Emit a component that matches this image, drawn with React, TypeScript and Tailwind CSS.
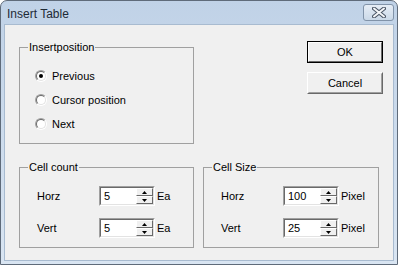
import React from "react";

const font = { fontFamily: '"Liberation Sans", Arial, sans-serif' };

const Radio = ({ label, checked }: { label: string; checked?: boolean }) => (
  <div className="flex items-center h-[24px]">
    <span className="w-[12px] h-[12px] rounded-full border border-t-[#a0a0a0] border-l-[#a0a0a0] border-r-white border-b-white flex">
      <span className="flex-1 rounded-full border border-t-[#696969] border-l-[#696969] border-r-[#e3e3e3] border-b-[#e3e3e3] bg-white flex items-center justify-center">
        {checked && <span className="w-[4px] h-[4px] rounded-full bg-black"></span>}
      </span>
    </span>
    <span className="ml-[5px] text-[11px] text-black">{label}</span>
  </div>
);

const SpinBtn = ({ up }: { up?: boolean }) => (
  <div className="h-[8px] bg-[#f0f0f0] border border-t-white border-l-white border-r-[#696969] border-b-[#696969] flex items-center justify-center">
    <svg width="5" height="3" viewBox="0 0 5 3">
      {up ? <path d="M2.5 0 L5 3 L0 3 Z" fill="#000" /> : <path d="M0 0 L5 0 L2.5 3 Z" fill="#000" />}
    </svg>
  </div>
);

const Spinner = ({ value }: { value: string }) => (
  <div className="w-[56px] h-[20px] border border-t-[#a0a0a0] border-l-[#a0a0a0] border-r-white border-b-white flex">
    <div className="flex-1 border border-t-[#696969] border-l-[#696969] border-r-[#e3e3e3] border-b-[#e3e3e3] bg-white flex">
      <span className="flex-1 pl-[3px] text-[11px] leading-[16px] text-black">{value}</span>
      <div className="w-[17px] flex flex-col">
        <SpinBtn up />
        <SpinBtn />
      </div>
    </div>
  </div>
);

const Field = ({ label, value, unit }: { label: string; value: string; unit: string }) => (
  <div className="flex items-center h-[20px]">
    <span className="w-[62px] text-[11px] text-black">{label}</span>
    <Spinner value={value} />
    <span className="ml-[2px] text-[11px] text-black">{unit}</span>
  </div>
);

const Group = ({ title, className, children }: { title: string; className: string; children: React.ReactNode }) => (
  <div className={`relative border border-[#a0a0a0] ${className}`}>
    <span className="absolute left-[8px] top-[-8px] bg-[#f0f0f0] px-[1px] text-[11px] leading-[14px] text-black">{title}</span>
    {children}
  </div>
);

const App: React.FC = () => {
  return (
    <div style={font} className="w-[398px] h-[265px] bg-white">
      <div className="w-[398px] h-[265px] rounded-t-[7px] border border-[#5f6b7a] bg-gradient-to-b from-[#c0d2e7] to-[#d9e5f2] flex flex-col">
        {/* Title bar */}
        <div className="h-[23px] flex items-start justify-between pl-[6px] pr-[3px]">
          <span className="mt-[4px] text-[12px] text-[#1e2a36]">Insert Table</span>
          <div className="mt-[3px] w-[31px] h-[17px] rounded-[3px] border border-[#8193a9] bg-gradient-to-b from-[#e6edf6] to-[#cbd9e8] flex items-center justify-center">
            <svg width="14" height="11" viewBox="0 0 14 11">
              <path d="M2 1.5 L12 9.5 M12 1.5 L2 9.5" stroke="#4a5565" strokeWidth="4" strokeLinecap="round" />
              <path d="M2 1.5 L12 9.5 M12 1.5 L2 9.5" stroke="#f4f6f9" strokeWidth="2" strokeLinecap="round" />
            </svg>
          </div>
        </div>

        {/* Client area */}
        <div className="flex-1 mx-[3px] mb-[3px] bg-[#f0f0f0] border border-[#a8bbd0] pl-[14px]">
          <div className="flex items-start">
            <Group title="Insertposition" className="mt-[22px] w-[175px] h-[97px] pl-[15px] pt-[16px]">
              <Radio label="Previous" checked />
              <Radio label="Cursor position" />
              <Radio label="Next" />
            </Group>
            <div className="ml-[113px] mt-[16px] flex flex-col">
              <button className="w-[76px] h-[22px] border border-black bg-[#f0f0f0] flex">
                <span className="flex-1 border border-t-white border-l-white border-r-[#696969] border-b-[#696969] text-[11px] text-black flex items-center justify-center">OK</span>
              </button>
              <button className="mt-[9px] w-[76px] h-[22px] border border-t-white border-l-white border-r-[#696969] border-b-[#696969] bg-[#f0f0f0] flex">
                <span className="flex-1 border border-t-[#f0f0f0] border-l-[#f0f0f0] border-r-[#a0a0a0] border-b-[#a0a0a0] text-[11px] text-black flex items-center justify-center">Cancel</span>
              </button>
            </div>
          </div>
          <div className="flex mt-[23px]">
            <Group title="Cell count" className="w-[175px] h-[81px] pl-[17px] pt-[18px] flex flex-col gap-[12px]">
              <Field label="Horz" value="5" unit="Ea" />
              <Field label="Vert" value="5" unit="Ea" />
            </Group>
            <Group title="Cell Size" className="ml-[9px] w-[176px] h-[81px] pl-[17px] pt-[18px] flex flex-col gap-[12px]">
              <Field label="Horz" value="100" unit="Pixel" />
              <Field label="Vert" value="25" unit="Pixel" />
            </Group>
          </div>
        </div>
      </div>
    </div>
  );
};

export default App;
